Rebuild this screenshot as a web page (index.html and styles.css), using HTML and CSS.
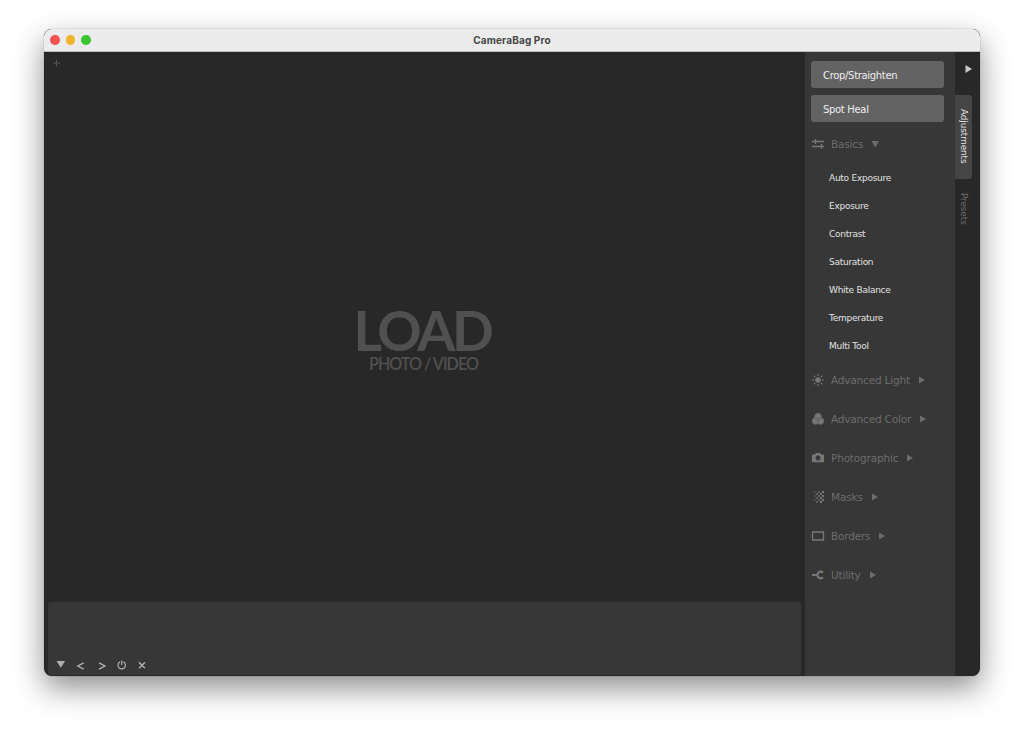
FILE: index.html
```html
<!DOCTYPE html>
<html lang="en">
<head>
  <meta charset="UTF-8">
  <meta name="viewport" content="width=device-width, initial-scale=1.0">
  <title>CameraBag Pro</title>
  <link rel="stylesheet" href="styles.css">
</head>
<body>
  <div class="window">
    <header class="titlebar">
      <div class="lights">
        <span class="light red"></span>
        <span class="light yellow"></span>
        <span class="light green"></span>
      </div>
      <h1>CameraBag Pro</h1>
    </header>

    <div class="content">
      <main class="workspace">
        <svg class="add" width="8" height="8" viewBox="0 0 8 8"><path d="M4.500 .5v7M1 4h7"/></svg>
        <div class="load">
          <div class="load-title">LOAD</div>
          <div class="load-sub">PHOTO / VIDEO</div>
        </div>
        <div class="tray">
          <svg width="100" height="14" viewBox="0 0 100 14">
            <path class="fill" d="M4.500 3h8.600L8.800 9.800z"/>
            <path d="M31.700 4.800L25.800 8l5.900 3.200"/>
            <path d="M47 4.800L52.900 8 47 11.200"/>
            <path class="thin" d="M68 3.900a3.700 3.700 0 1 0 3.400 0M69.700 2.500v4.600"/>
            <path d="M87 4.300l6 6M93 4.300l-6 6"/>
          </svg>
        </div>
      </main>

      <aside class="sidebar">
        <button>Crop/Straighten</button>
        <button>Spot Heal</button>

        <div class="group open">
          <svg class="icon" viewBox="0 0 14 14"><path class="line" d="M1 4.500h12M1 9.500h12M4.500 2v5M10.500 7v5"/></svg>
          <span>Basics</span>
          <svg class="arrow" viewBox="0 0 8 8"><path d="M.5 1h7.500L4.300 7.500z"/></svg>
        </div>
        <ul class="tools">
          <li>Auto Exposure</li>
          <li>Exposure</li>
          <li>Contrast</li>
          <li>Saturation</li>
          <li>White Balance</li>
          <li>Temperature</li>
          <li>Multi Tool</li>
        </ul>

        <div class="group">
          <svg class="icon" viewBox="0 0 14 14"><circle cx="7" cy="7" r="2.800"/><path class="ray" d="M7 1v2M7 11v2M1 7h2M11 7h2M2.700 2.700l1.400 1.400M9.900 9.900l1.400 1.400M2.700 11.300l1.400-1.400M9.900 4.100l1.400-1.400"/></svg>
          <span>Advanced Light</span>
          <svg class="arrow" viewBox="0 0 8 8"><path d="M1 .5v7L7 4z"/></svg>
        </div>
        <div class="group">
          <svg class="icon" viewBox="0 0 14 14"><circle cx="7" cy="4.700" r="3.600"/><circle cx="4.600" cy="9" r="3.600"/><circle cx="9.400" cy="9" r="3.600"/><g class="cut"><circle cx="7" cy="4.900" r="3.300"/><circle cx="4.700" cy="8.900" r="3.300"/><circle cx="9.300" cy="8.900" r="3.300"/></g></svg>
          <span>Advanced Color</span>
          <svg class="arrow" viewBox="0 0 8 8"><path d="M1 .5v7L7 4z"/></svg>
        </div>
        <div class="group">
          <svg class="icon" viewBox="0 0 14 14"><path fill-rule="evenodd" d="M1.800 3.500h2L4.900 2h4.200l1.100 1.500h2q.8 0 .8.800v6.200q0 .8-.8.800H1.800q-.8 0-.8-.8V4.300q0-.8.8-.8zM7 4.500a2.500 2.500 0 1 0 .01 0z"/></svg>
          <span>Photographic</span>
          <svg class="arrow" viewBox="0 0 8 8"><path d="M1 .5v7L7 4z"/></svg>
        </div>
        <div class="group">
          <svg class="icon" viewBox="0 0 14 14">
            <path d="M11 1h2v2h-2zM11 5h2v2h-2zM11 9h2v2h-2zM9 3h2v2H9zM9 7h2v2H9zM9 11h2v2H9z"/>
            <path opacity=".6" d="M7 1h2v2H7zM7 5h2v2H7zM7 9h2v2H7zM5 3h2v2H5zM5 7h2v2H5zM5 11h2v2H5z"/>
            <path opacity=".3" d="M3 1h2v2H3zM3 5h2v2H3zM3 9h2v2H3z"/>
          </svg>
          <span>Masks</span>
          <svg class="arrow" viewBox="0 0 8 8"><path d="M1 .5v7L7 4z"/></svg>
        </div>
        <div class="group">
          <svg class="icon" viewBox="0 0 14 14"><path class="line" d="M1.500 3h11v8h-11z"/></svg>
          <span>Borders</span>
          <svg class="arrow" viewBox="0 0 8 8"><path d="M1 .5v7L7 4z"/></svg>
        </div>
        <div class="group">
          <svg class="icon" viewBox="0 0 14 14"><path class="wrench" d="M11.900 4.600A3.300 3.300 0 1 0 11.900 9.400M6.500 7H1"/></svg>
          <span>Utility</span>
          <svg class="arrow" viewBox="0 0 8 8"><path d="M1 .5v7L7 4z"/></svg>
        </div>
      </aside>

      <nav class="tabs">
        <svg class="collapse" width="8" height="10" viewBox="0 0 8 10"><path d="M.5 1v8L7 5z"/></svg>
        <div class="tab active">Adjustments</div>
        <div class="tab">Presets</div>
      </nav>
    </div>
  </div>
</body>
</html>
```

FILE: styles.css
```css
* {
  box-sizing: border-box;
}

body {
  margin: 0;
  padding: 29px 44px 0;
  height: 734px;
  overflow: hidden;
  background: #fff;
  font-family: "DejaVu Sans", sans-serif;
}

.window {
  display: flex;
  flex-direction: column;
  width: 936px;
  height: 647px;
  border-radius: 8px;
  overflow: hidden;
  background: #282828;
  box-shadow: 0 0 1px rgba(0, 0, 0, 0.6), 0 12px 30px rgba(0, 0, 0, 0.45);
}

.titlebar {
  display: grid;
  grid-template-columns: 60px 1fr 60px;
  align-items: center;
  height: 23px;
  background: #ececec;
  border-bottom: 1px solid #bbb;
}

.titlebar h1 {
  margin: 0;
  text-align: center;
  font: bold 10px Inter, sans-serif;
  letter-spacing: 0.15px;
  color: #454545;
}

.lights {
  display: flex;
  gap: 6px;
  padding-left: 6px;
}

.light {
  width: 9.6px;
  height: 9.6px;
  border-radius: 50%;
}

.red { background: #f3544f; }
.yellow { background: #f2b42c; }
.green { background: #3bc532; }

.content {
  display: flex;
  flex: 1;
  min-height: 0;
}

.workspace {
  display: flex;
  flex-direction: column;
  width: 761px;
  padding: 7px 4px 1px;
}

.add {
  margin-left: 4px;
  fill: none;
  stroke: #555;
}

.load {
  flex: 1;
  padding-top: 236px;
  text-align: center;
  font-family: Lato, sans-serif;
  color: #505050;
}

.load-title {
  height: 51px;
  line-height: 54px;
  font-size: 55px;
  font-weight: 700;
  letter-spacing: -3.4px;
  text-indent: -5px;
}

.load-sub {
  line-height: 20px;
  font-size: 16.2px;
  font-weight: 600;
  letter-spacing: -1.02px;
  text-indent: -2px;
}

.tray {
  display: flex;
  align-items: flex-end;
  height: 73px;
  padding: 0 4px 3px;
  border-radius: 3px;
  background: #373737;
}

.tray svg {
  fill: none;
  stroke: #b0b0b0;
  stroke-width: 1.4;
}

.tray .fill {
  fill: #b0b0b0;
  stroke: none;
}

.tray .thin {
  stroke-width: 1.2;
}

.sidebar {
  width: 150px;
  padding: 9px 11px 0 6px;
  background: #373737;
}

.sidebar button {
  display: block;
  width: 133px;
  height: 27px;
  margin-bottom: 7px;
  padding: 1px 12px 0;
  border: none;
  border-radius: 3px;
  background: #636363;
  color: #eee;
  font: 10px "DejaVu Sans", sans-serif;
  letter-spacing: -0.32px;
  text-align: left;
}

.group {
  display: flex;
  align-items: center;
  height: 39px;
  font-size: 10.5px;
  letter-spacing: -0.18px;
  color: #6c6c6c;
}

.group.open {
  height: 30px;
}

.icon {
  width: 14px;
  height: 14px;
  margin-right: 6px;
  fill: #777;
}

.icon .line,
.icon .ray,
.icon .wrench {
  fill: none;
  stroke: #777;
  stroke-width: 1.3;
}

.icon .ray {
  stroke-width: 1.1;
}

.icon .wrench {
  stroke-width: 2.2;
}

.icon .cut {
  fill: none;
  stroke: #5c5c5c;
  stroke-width: 0.5;
}

.arrow {
  width: 8px;
  height: 8px;
  margin-left: 8px;
  fill: #6c6c6c;
}

.tools {
  margin: 5px 0 0;
  padding: 0 0 0 18px;
  list-style: none;
  font-size: 9px;
  letter-spacing: -0.26px;
  color: #e2e2e2;
}

.tools li {
  height: 28px;
  line-height: 28px;
}

.tabs {
  width: 25px;
}

.collapse {
  display: block;
  margin: 12px 0 21px 10px;
  fill: #c8c8c8;
}

.tab {
  width: 17px;
  height: 84px;
  line-height: 17px;
  padding-top: 14px;
  writing-mode: vertical-rl;
  font-size: 8.8px;
  letter-spacing: -0.05px;
  color: #6c6c6c;
}

.tab.active {
  border-radius: 0 3px 3px 0;
  background: #454545;
  color: #e2e2e2;
}
```
